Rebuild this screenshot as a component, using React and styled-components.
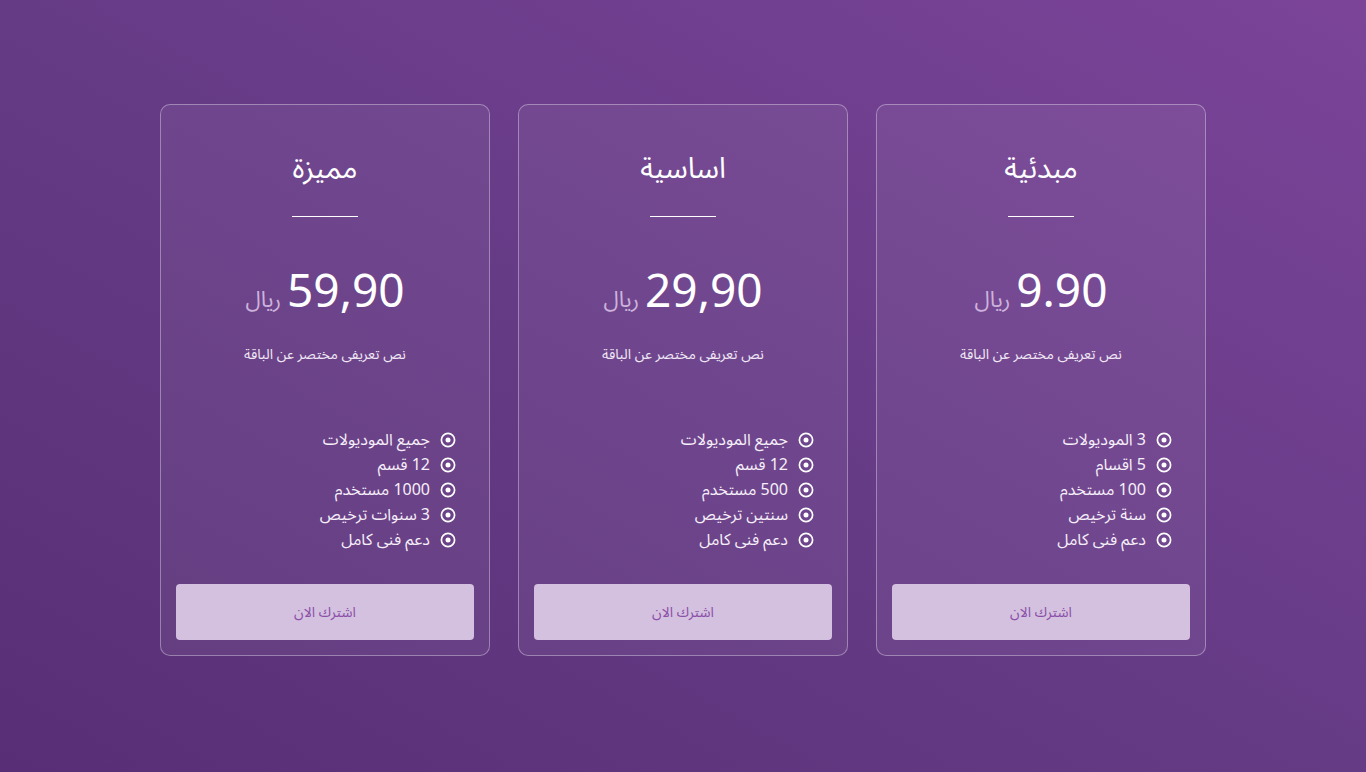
import React from "react";
import styled, { createGlobalStyle } from "styled-components";

const Global = createGlobalStyle`
  html, body { margin: 0; padding: 0; }
  body {
    font-family: "Noto Sans Arabic", "Noto Sans", "DejaVu Sans", sans-serif;
  }
  * { box-sizing: border-box; }
`;

const Page = styled.div`
  width: 100%;
  min-height: 772px;
  background: linear-gradient(to top right, #582f76 0%, #663b86 50%, #7b4499 100%);
  display: flex;
  justify-content: center;
  padding-top: 104px;
  direction: rtl;
`;

const Row = styled.div`
  display: flex;
  gap: 28px;
  align-items: flex-start;
`;

const Card = styled.div`
  width: 330px;
  height: 552px;
  border: 1px solid rgba(255, 255, 255, 0.35);
  border-radius: 10px;
  background: rgba(255, 255, 255, 0.06);
  display: flex;
  flex-direction: column;
  align-items: center;
  padding: 0 15px 15px;
  color: #fff;
`;

const Title = styled.h2`
  margin: 44px 0 0;
  font-size: 29px;
  font-weight: 400;
  line-height: 40px;
`;

const Divider = styled.div`
  width: 66px;
  height: 1px;
  background: #fff;
  margin-top: 27px;
`;

const PriceRow = styled.div`
  margin-top: 48px;
  display: flex;
  align-items: baseline;
  gap: 6px;
  direction: rtl;
  height: 56px;
`;

const Amount = styled.span`
  font-size: 46px;
  line-height: 56px;
  font-weight: 400;
  direction: ltr;
`;

const Currency = styled.span`
  font-size: 22px;
  color: #cdb3dc;
`;

const Desc = styled.p`
  margin: 22px 0 0;
  font-size: 14px;
  line-height: 24px;
  color: #f1e8f5;
`;

const List = styled.ul`
  list-style: none;
  margin: 60px 0 0;
  padding: 0 18px 0 0;
  align-self: stretch;
  display: flex;
  flex-direction: column;
  align-items: flex-start;
`;

const Item = styled.li`
  display: flex;
  align-items: center;
  gap: 10px;
  height: 25px;
  font-size: 16px;
  line-height: 20px;
  color: #f6eff9;
  overflow: visible;
`;

const Label = styled.span`
  display: block;
  line-height: 20px;
  height: 20px;
  white-space: nowrap;
`;

const Dot = () => (
  <svg width="16" height="16" viewBox="0 0 16 16" aria-hidden="true">
    <circle cx="8" cy="8" r="6.6" fill="none" stroke="#fff" strokeWidth="1.7" />
    <circle cx="8" cy="8" r="2.5" fill="#fff" />
  </svg>
);

const Button = styled.button`
  margin-top: auto;
  align-self: stretch;
  height: 56px;
  border: none;
  border-radius: 4px;
  background: #d4c0df;
  color: #8a4fa8;
  font-family: inherit;
  font-size: 14px;
  cursor: pointer;
`;

const plans = [
  {
    title: "مبدئية",
    price: "9.90",
    features: ["3 الموديولات", "5 اقسام", "100 مستخدم", "سنة ترخيص", "دعم فنى كامل"],
  },
  {
    title: "اساسية",
    price: "29,90",
    features: ["جميع الموديولات", "12 قسم", "500 مستخدم", "سنتين ترخيص", "دعم فنى كامل"],
  },
  {
    title: "مميزة",
    price: "59,90",
    features: ["جميع الموديولات", "12 قسم", "1000 مستخدم", "3 سنوات ترخيص", "دعم فنى كامل"],
  },
];

export default function App() {
  return (
    <>
      <Global />
      <Page>
        <Row>
          {plans.map((p) => (
            <Card key={p.title}>
              <Title>{p.title}</Title>
              <Divider />
              <PriceRow>
                <Amount>{p.price}</Amount>
                <Currency>ريال</Currency>
              </PriceRow>
              <Desc>نص تعريفى مختصر عن الباقة</Desc>
              <List>
                {p.features.map((f) => (
                  <Item key={f}>
                    <Dot />
                    <Label>{f}</Label>
                  </Item>
                ))}
              </List>
              <Button>اشترك الان</Button>
            </Card>
          ))}
        </Row>
      </Page>
    </>
  );
}
